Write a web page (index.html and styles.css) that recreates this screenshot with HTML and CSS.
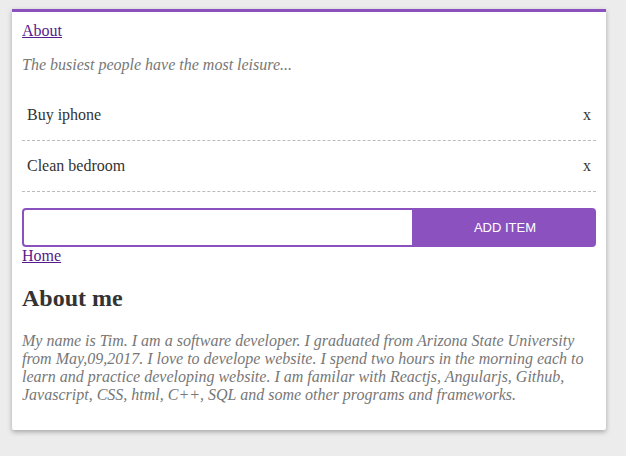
FILE: index.html
```html
<!DOCTYPE html>
<html>
<head>
<meta charset="utf-8">
<link rel="stylesheet" href="styles.css">
</head>
<body>
<div class="page">
  <div class="card">
    <a class="nav" href="#about">About</a>
    <p class="quote">The busiest people have the most leisure...</p>
    <ul class="list">
      <li class="item"><span>Buy iphone</span><span class="del">x</span></li>
      <li class="item"><span>Clean bedroom</span><span class="del">x</span></li>
    </ul>
    <form class="form">
      <input class="input" type="text">
      <button class="btn" type="button">ADD ITEM</button>
    </form>
    <a class="nav" href="#home">Home</a>
    <h2 class="title">About me</h2>
    <p class="about">My name is Tim. I am a software developer. I graduated from Arizona State University from May,09,2017. I love to develope website. I spend two hours in the morning each to learn and practice developing website. I am familar with Reactjs, Angularjs, Github, Javascript, CSS, html, C++, SQL and some other programs and frameworks.</p>
  </div>
</div>
</body>
</html>
```
FILE: styles.css
```css
html, body {
  margin: 0;
  padding: 0;
  background: #ececec;
}
body {
  font-family: "Liberation Serif", "Times New Roman", serif;
  font-size: 16px;
  color: #333;
}
.page {
  padding: 9px 20px 24px 12px;
}
.card {
  width: 574px;
  background: #fff;
  border-top: 3px solid #8b52bf;
  padding: 10px 10px 10px 10px;
  border-radius: 0 0 2px 2px;
  box-shadow: 0 2px 5px rgba(0,0,0,0.3);
}
.nav {
  color: #551a8b;
  display: inline-block;
}
.quote {
  margin: 16px 0;
  font-style: italic;
  color: #777;
}
.list {
  list-style: none;
  margin: 0;
  padding: 0;
}
.item {
  display: flex;
  justify-content: space-between;
  padding: 16px 5px;
  border-bottom: 1px dashed #bbb;
}
.del {
  cursor: pointer;
}
.form {
  display: flex;
  margin: 16px 0 0 0;
  height: 39px;
}
.input {
  width: 392px;
  box-sizing: border-box;
  border: 2px solid #8b52bf;
  border-radius: 4px 0 0 4px;
  margin: 0;
  padding: 0 8px;
  outline: none;
  font-size: 16px;
}
.btn {
  flex: 1;
  margin: 0;
  border: none;
  background: #8b52bf;
  color: #fff;
  border-radius: 0 4px 4px 0;
  font-family: "Liberation Sans", Arial, sans-serif;
  font-size: 13px;
}
.title {
  font-size: 24px;
  margin: 20px 0;
}
.about {
  margin: 16px 0;
  font-style: italic;
  color: #777;
}
```
